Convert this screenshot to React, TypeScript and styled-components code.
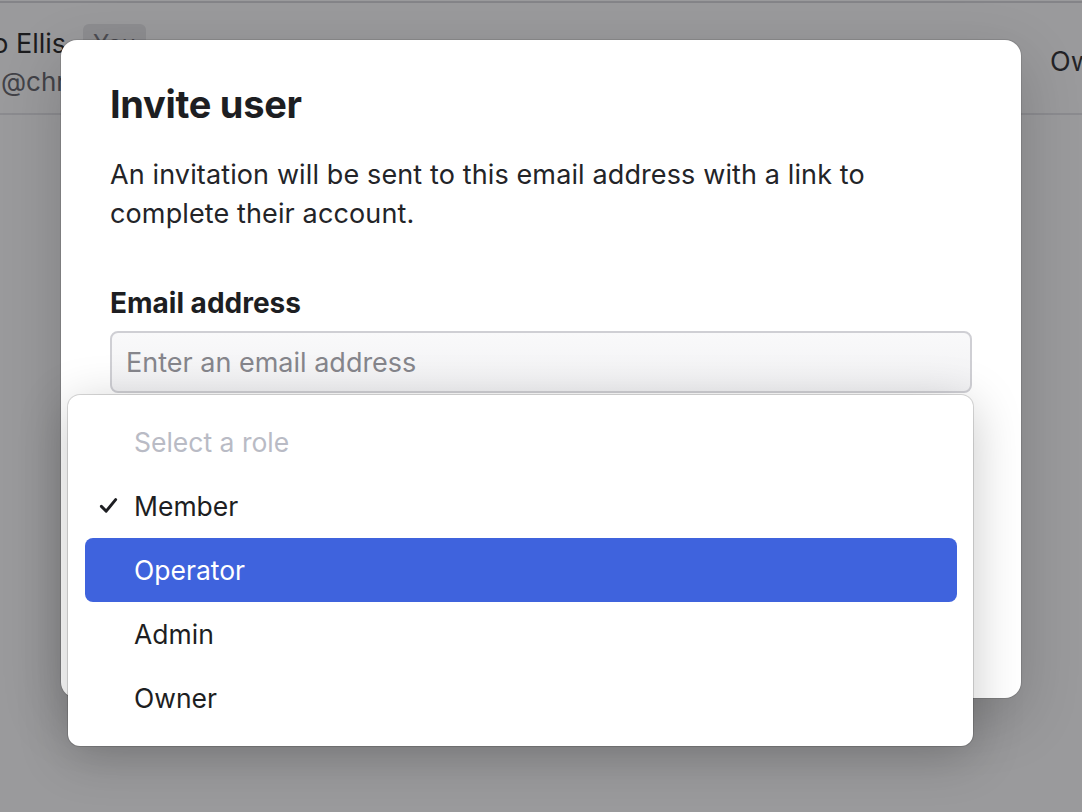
import React from 'react';
import styled, { createGlobalStyle } from 'styled-components';

const GlobalStyle = createGlobalStyle`
  html, body {
    margin: 0;
    padding: 0;
    width: 100%;
    height: 100%;
    overflow: hidden;
    background: #ffffff;
    font-family: Inter, "Noto Sans", "Liberation Sans", sans-serif;
    color: #1d1e22;
  }
  * { box-sizing: border-box; }
`;

type RoleOption = { label: string; checked?: boolean; active?: boolean; placeholder?: boolean };

const roles: RoleOption[] = [
  { label: 'Select a role', placeholder: true },
  { label: 'Member', checked: true },
  { label: 'Operator', active: true },
  { label: 'Admin' },
  { label: 'Owner' },
];

const App = () => {
  return (
    <>
      <GlobalStyle />
      <Screen>
        <MemberTable>
          <MemberRow>
            <MemberInfo>
              <NameLine>
                <Name>Theo Ellis</Name>
                <YouBadge>You</YouBadge>
              </NameLine>
              <Handle>@chrtheo</Handle>
            </MemberInfo>
            <RoleCell>Owner</RoleCell>
          </MemberRow>
        </MemberTable>

        <Backdrop />

        <Dialog>
          <Title>Invite user</Title>
          <Description>
            An invitation will be sent to this email address with a link to complete their account.
          </Description>
          <Field>
            <Label>Email address</Label>
            <EmailInput placeholder="Enter an email address" />
          </Field>
        </Dialog>

        <RoleMenu>
          {roles.map((role) => (
            <RoleItem key={role.label} $active={role.active} $placeholder={role.placeholder}>
              {role.checked && (
                <Check viewBox="0 0 20 20">
                  <path d="M3.2 10.8l4.6 4.6L16.8 4.4" />
                </Check>
              )}
              {role.label}
            </RoleItem>
          ))}
        </RoleMenu>
      </Screen>
    </>
  );
};

export default App;

const Screen = styled.div`
  position: relative;
  width: 100vw;
  height: 100vh;
  overflow: hidden;
`;

const MemberTable = styled.div`
  border-top: 2px solid #d6d6da;
  margin-top: 1px;
`;

const MemberRow = styled.div`
  display: flex;
  align-items: center;
  justify-content: space-between;
  height: 112px;
  border-bottom: 2px solid #e2e2e6;
`;

const MemberInfo = styled.div`
  display: flex;
  flex-direction: column;
  gap: 2px;
  padding-top: 4px;
`;

const NameLine = styled.div`
  display: flex;
  align-items: center;
  gap: 17px;
  margin-left: -57px;
`;

const Name = styled.span`
  font-size: 27px;
  color: #111;
`;

const YouBadge = styled.span`
  background: #e6e6e8;
  color: #6f6f75;
  font-size: 24px;
  line-height: 32px;
  padding: 4px 10px;
  border-radius: 6px;
`;

const Handle = styled.span`
  font-size: 26px;
  color: #5a5a60;
  margin-left: 1px;
`;

const RoleCell = styled.span`
  font-size: 27px;
  width: 32px;
  overflow: hidden;
  white-space: nowrap;
  margin-top: 6px;
`;

const Backdrop = styled.div`
  position: absolute;
  inset: 0;
  background: rgba(40, 40, 44, 0.47);
`;

const Dialog = styled.div`
  position: absolute;
  left: 61px;
  top: 40px;
  width: 960px;
  height: 658px;
  background: #ffffff;
  border-radius: 16px;
  padding: 40px 49px;
  box-shadow: 0 0 0 1px rgba(0, 0, 0, 0.1), 0 20px 60px rgba(0, 0, 0, 0.18);
`;

const Title = styled.h2`
  margin: 0;
  font-size: 38px;
  font-weight: 700;
  letter-spacing: -0.3px;
  line-height: 48px;
  color: #1d1e22;
`;

const Description = styled.p`
  margin: 27px 0 0;
  font-size: 27px;
  letter-spacing: 0.12px;
  line-height: 39px;
  color: #232428;
  max-width: 790px;
`;

const Field = styled.div`
  display: flex;
  flex-direction: column;
  gap: 12px;
  margin-top: 54px;
`;

const Label = styled.label`
  font-size: 28px;
  font-weight: 700;
  line-height: 32px;
  color: #1d1e22;
`;

const EmailInput = styled.input`
  height: 62px;
  width: 100%;
  border: 2px solid #cfcfd4;
  border-radius: 8px;
  background: linear-gradient(#f9f9fa, #f2f2f4);
  padding: 0 14px;
  font-family: inherit;
  font-size: 27px;
  color: #1d1e22;
  outline: none;

  &::placeholder {
    color: #86868c;
  }
`;

const RoleMenu = styled.div`
  position: absolute;
  left: 68px;
  top: 395px;
  width: 905px;
  padding: 15px 16px 16px 17px;
  background: #ffffff;
  border-radius: 12px;
  box-shadow: 0 0 0 1px rgba(0, 0, 0, 0.14), 0 10px 50px rgba(0, 0, 0, 0.22);
`;

const RoleItem = styled.div<{ $active?: boolean; $placeholder?: boolean }>`
  position: relative;
  height: 64px;
  display: flex;
  align-items: center;
  padding-left: 49px;
  border-radius: 8px;
  font-size: 26.5px;
  color: ${(p) => (p.$active ? '#ffffff' : p.$placeholder ? '#b9bbc5' : '#1d1e22')};
  background: ${(p) => (p.$active ? '#3f63dd' : 'transparent')};
`;

const Check = styled.svg`
  position: absolute;
  left: 13px;
  top: 21px;
  width: 21px;
  height: 21px;
  fill: none;
  stroke: #1d1e22;
  stroke-width: 2.8;
  stroke-linecap: round;
  stroke-linejoin: round;
`;
